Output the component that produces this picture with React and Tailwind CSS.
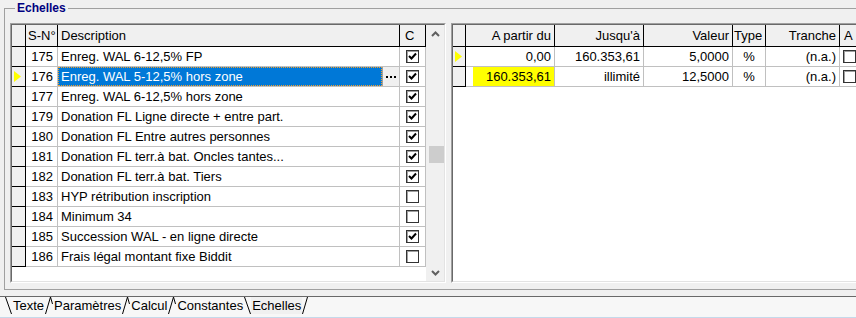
import React from 'react';

const rows = [
  { id: 175, desc: 'Enreg. WAL 6-12,5% FP', c: true },
  { id: 176, desc: 'Enreg. WAL 5-12,5% hors zone', c: true, sel: true },
  { id: 177, desc: 'Enreg. WAL 6-12,5% hors zone', c: true },
  { id: 179, desc: 'Donation FL Ligne directe + entre part.', c: true },
  { id: 180, desc: 'Donation FL Entre autres personnes', c: true },
  { id: 181, desc: 'Donation FL terr.à bat. Oncles tantes...', c: true },
  { id: 182, desc: 'Donation FL terr.à bat. Tiers', c: true },
  { id: 183, desc: 'HYP rétribution inscription', c: false },
  { id: 184, desc: 'Minimum 34', c: false },
  { id: 185, desc: 'Succession WAL - en ligne directe', c: true },
  { id: 186, desc: 'Frais légal montant fixe Biddit', c: false },
];

const scales = [
  { from: '0,00', to: '160.353,61', value: '5,0000', type: '%', tranche: '(n.a.)', cur: true },
  { from: '160.353,61', to: 'illimité', value: '12,5000', type: '%', tranche: '(n.a.)', edit: true },
];

function Check({ on }) {
  return (
    <div className="w-[13px] h-[13px] bg-white border border-[#333] shadow-[inset_1px_1px_0_#a0a0a0] flex items-center justify-center">
      {on && (
        <svg width="9" height="9" viewBox="0 0 9 9">
          <path d="M1 4 L3.5 6.5 L8 1.5" stroke="#000" strokeWidth="2" fill="none" />
        </svg>
      )}
    </div>
  );
}

function Arrow() {
  return (
    <svg width="7" height="11" viewBox="0 0 7 11" className="ml-[2px]">
      <polygon points="0,0 7,5.5 0,11" fill="#ffff00" />
    </svg>
  );
}

function Chevron({ down }) {
  return (
    <svg width="9" height="6" viewBox="0 0 9 6">
      <path d={down ? 'M1 1 L4.5 4.5 L8 1' : 'M1 5 L4.5 1.5 L8 5'} stroke="#606060" strokeWidth="2" fill="none" />
    </svg>
  );
}

function Edge({ kind }) {
  if (kind === 'mid') {
    return (
      <svg width="8" height="17" viewBox="0 0 8 17" className="shrink-0">
        <path d="M0.5 17 L5.5 0 L7.5 7" stroke="#000" strokeWidth="1" fill="none" />
      </svg>
    );
  }
  if (kind === 'end') {
    return (
      <svg width="7" height="17" viewBox="0 0 7 17" className="shrink-0">
        <path d="M0.5 17 L5.5 0" stroke="#000" strokeWidth="1" fill="none" />
      </svg>
    );
  }
  return (
    <svg width="7" height="17" viewBox="0 0 7 17" className="shrink-0">
      <path d="M0.5 0 L6.5 17" stroke="#000" strokeWidth="1" fill="none" />
    </svg>
  );
}

export default function App() {
  return (
    <div
      className="w-[856px] h-[318px] overflow-hidden bg-[#f0f0f0] text-[13px] text-black leading-none"
      style={{ fontFamily: '"Liberation Sans", Arial, sans-serif' }}
    >
      <fieldset className="mt-px ml-[4px] w-[880px] h-[289px] border border-[#a0a0a0] pt-[8px] pl-[5px]">
        <legend className="ml-[5px] px-[2px] text-[12px] font-bold leading-[14px] text-[#000080]">Echelles</legend>
        <div className="flex">
          {/* left grid */}
          <div className="w-[436px] h-[260px] border border-t-[#a0a0a0] border-l-[#a0a0a0] border-b-white border-r-white">
            <div className="h-full flex border border-t-[#696969] border-l-[#696969] border-b-[#e3e3e3] border-r-[#e3e3e3] bg-white">
              <div className="w-[414px]">
                <div className="flex h-[22px] bg-[#f0f0f0] border-b border-black">
                  <div className="w-[14px] border-r border-black" />
                  <div className="w-[32px] border-r border-black flex items-center pl-[2px]">S-N°</div>
                  <div className="w-[342px] border-r border-black flex items-center pl-[3px]">Description</div>
                  <div className="w-[26px] border-r border-black flex items-center pl-[5px]">C</div>
                </div>
                {rows.map((r) => (
                  <div key={r.id} className="flex h-[20px]">
                    <div className="w-[14px] bg-[#f0f0f0] border-r border-b border-black flex items-center">
                      {r.sel && <Arrow />}
                    </div>
                    <div className="w-[32px] border-r border-b border-[#c0c0c0] flex items-center justify-end pr-[4px]">{r.id}</div>
                    {r.sel ? (
                      <div className="w-[342px] border-r border-b border-[#c0c0c0] flex">
                        <div className="flex-1 bg-[#0078d7] text-white border border-dotted border-[#f3a02c] flex items-center pl-[2px]">{r.desc}</div>
                        <div className="w-[17px] bg-[#f0f0f0] border-l border-[#a0a0a0] flex items-center justify-center gap-[2px]">
                          <div className="w-[2px] h-[2px] bg-black" />
                          <div className="w-[2px] h-[2px] bg-black" />
                          <div className="w-[2px] h-[2px] bg-black" />
                        </div>
                      </div>
                    ) : (
                      <div className="w-[342px] border-r border-b border-[#c0c0c0] flex items-center pl-[3px]">{r.desc}</div>
                    )}
                    <div className="w-[26px] border-r border-b border-[#c0c0c0] flex items-center justify-center">
                      <Check on={r.c} />
                    </div>
                  </div>
                ))}
              </div>
              <div className="w-[18px] bg-[#f0f0f0] flex flex-col">
                <div className="h-[17px] flex items-center justify-center"><Chevron /></div>
                <div className="flex-1 flex flex-col">
                  <div className="h-[104px]" />
                  <div className="ml-[3px] w-[15px] h-[17px] bg-[#cdcdcd]" />
                </div>
                <div className="h-[17px] flex items-center justify-center"><Chevron down /></div>
              </div>
            </div>
          </div>

          {/* right grid */}
          <div className="ml-[5px] w-[430px] h-[260px] border border-t-[#a0a0a0] border-l-[#a0a0a0] border-b-white border-r-white">
            <div className="h-full border border-t-[#696969] border-l-[#696969] border-b-[#e3e3e3] border-r-[#e3e3e3] bg-white">
              <div className="flex h-[22px] bg-[#f0f0f0] border-b border-black">
                <div className="w-[13px] border-r border-black" />
                <div className="w-[89px] border-r border-black flex items-center justify-end pr-[3px]">A partir du</div>
                <div className="w-[89px] border-r border-black flex items-center justify-end pr-[3px]">Jusqu'à</div>
                <div className="w-[89px] border-r border-black flex items-center justify-end pr-[3px]">Valeur</div>
                <div className="w-[33px] border-r border-black flex items-center pl-[1px]">Type</div>
                <div className="w-[74px] border-r border-black flex items-center justify-end pr-[3px]">Tranche</div>
                <div className="w-[30px] flex items-center pl-[4px]">A</div>
              </div>
              {scales.map((s, i) => (
                <div key={i} className="flex h-[20px]">
                  <div className="w-[13px] bg-[#f0f0f0] border-r border-b border-black flex items-center">
                    {s.cur && <Arrow />}
                  </div>
                  <div className="w-[89px] border-r border-b border-[#c0c0c0] flex items-center justify-end">
                    {s.edit ? (
                      <div className="w-[81px] h-full bg-[#ffff00] flex items-center justify-end pr-[3px]">{s.from}</div>
                    ) : (
                      <div className="pr-[3px]">{s.from}</div>
                    )}
                  </div>
                  <div className="w-[89px] border-r border-b border-[#c0c0c0] flex items-center justify-end pr-[3px]">{s.to}</div>
                  <div className="w-[89px] border-r border-b border-[#c0c0c0] flex items-center justify-end pr-[3px]">{s.value}</div>
                  <div className="w-[33px] border-r border-b border-[#c0c0c0] flex items-center justify-center">{s.type}</div>
                  <div className="w-[74px] border-r border-b border-[#c0c0c0] flex items-center justify-end pr-[3px]">{s.tranche}</div>
                  <div className="w-[30px] border-b border-[#c0c0c0] flex items-center pl-[3px]">
                    <Check on={false} />
                  </div>
                </div>
              ))}
            </div>
          </div>
        </div>
      </fieldset>

      {/* sheet tabs */}
      <div className="mt-[6px] h-[22px] bg-[#f7f7f7] border-t border-[#696969] border-b border-b-[#c5d9ea] pl-[5px] flex items-start">
        <Edge kind="start" />
        <div className="h-[17px] flex items-center px-[1px]">Texte</div>
        <Edge kind="mid" />
        <div className="h-[17px] flex items-center px-[1px]">Paramètres</div>
        <Edge kind="mid" />
        <div className="h-[17px] flex items-center px-[1px]">Calcul</div>
        <Edge kind="mid" />
        <div className="h-[17px] flex items-center px-[1px]">Constantes</div>
        <Edge kind="start" />
        <div className="h-[17px] flex items-center px-[1px] bg-[#f0f0f0]">Echelles</div>
        <Edge kind="end" />
      </div>
    </div>
  );
}
